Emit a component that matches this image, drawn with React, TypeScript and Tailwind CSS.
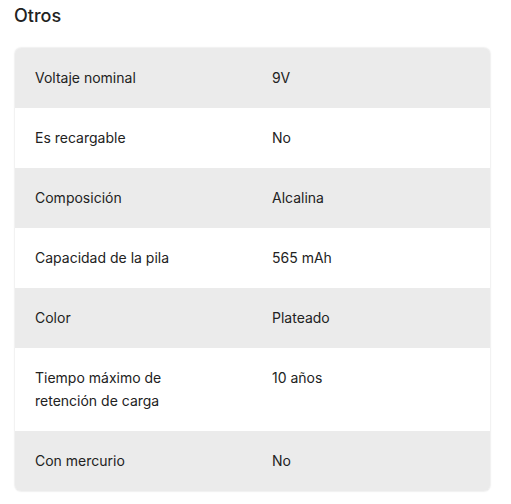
import React from "react";

const rows: [string, string][] = [
  ["Voltaje nominal", "9V"],
  ["Es recargable", "No"],
  ["Composición", "Alcalina"],
  ["Capacidad de la pila", "565 mAh"],
  ["Color", "Plateado"],
  ["Tiempo máximo de retención de carga", "10 años"],
  ["Con mercurio", "No"],
];

export default function App() {
  return (
    <div className="w-[511px] h-[504px] bg-white text-[#222] font-['Inter','Liberation_Sans',sans-serif]">
      <h2 className="pl-[14px] pt-[4px] text-[18px] leading-[24px] font-medium">Otros</h2>
      <div className="ml-[15px] mt-[20px] w-[475px] rounded-[6px] overflow-hidden shadow-[0_0_2px_rgba(0,0,0,0.2)]">
        {rows.map(([k, v], i) => (
          <div
            key={k}
            className={`grid grid-cols-[237px_1fr] px-[20px] pt-[18px] pb-[19px] text-[14px] leading-[23px] ${
              i % 2 === 0 ? "bg-[#ebebeb]" : "bg-white"
            }`}
          >
            <div className="pr-[60px]">{k}</div>
            <div>{v}</div>
          </div>
        ))}
      </div>
    </div>
  );
}
